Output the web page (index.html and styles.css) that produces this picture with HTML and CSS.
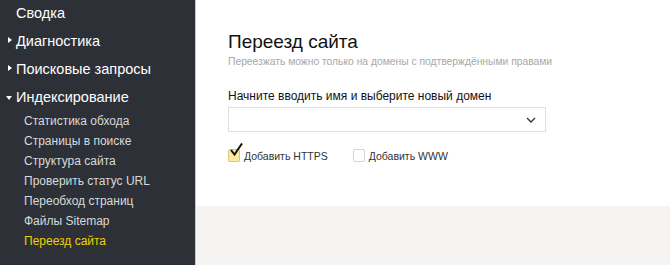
FILE: index.html
```html
<!DOCTYPE html>
<html lang="ru">
<head>
    <meta charset="UTF-8">
    <title>Переезд сайта</title>
    <link rel="stylesheet" href="styles.css">
</head>
<body>
    <div class="layout">
        <div class="sidebar">
            <div class="menu-item">Сводка</div>
            <div class="menu-item closed">Диагностика</div>
            <div class="menu-item closed">Поисковые запросы</div>
            <div class="menu-item open">Индексирование</div>
            <div class="submenu">
                <div class="sub-item">Статистика обхода</div>
                <div class="sub-item">Страницы в поиске</div>
                <div class="sub-item">Структура сайта</div>
                <div class="sub-item">Проверить статус URL</div>
                <div class="sub-item">Переобход страниц</div>
                <div class="sub-item">Файлы Sitemap</div>
                <div class="sub-item active">Переезд сайта</div>
            </div>
        </div>

        <div class="main">
            <div class="content">
                <h1>Переезд сайта</h1>
                <div class="hint">Переезжать можно только на домены с подтверждёнными правами</div>

                <div class="label">Начните вводить имя и выберите новый домен</div>
                <div class="select">
                    <svg width="10" height="6" viewBox="0 0 10 6"><path d="M1 1 L5 5 L9 1" fill="none" stroke="#333" stroke-width="1.3"/></svg>
                </div>

                <div class="options">
                    <label class="check">
                        <span class="box checked">
                            <svg width="16" height="16" viewBox="0 0 16 16"><path d="M3 7 L6.5 11.5 L14 0.5" fill="none" stroke="#111" stroke-width="2"/></svg>
                        </span>
                        Добавить HTTPS
                    </label>
                    <label class="check">
                        <span class="box"></span>
                        Добавить WWW
                    </label>
                </div>
            </div>
            <div class="footer"></div>
        </div>
    </div>
</body>
</html>
```

FILE: styles.css
```css
body {
    margin: 0;
    font-family: Arial, "Liberation Sans", sans-serif;
    background-color: #f5f4f2;
}

.layout {
    display: flex;
    height: 265px;
    overflow: hidden;
}

.sidebar {
    width: 196px;
    flex-shrink: 0;
    background-color: #2d3137;
    border-right: 1px solid #c9c9c9;
    box-sizing: border-box;
    margin-top: -1px;
}

.menu-item {
    color: #ffffff;
    font-size: 14.5px;
    line-height: 28px;
    padding-left: 16px;
    position: relative;
}

.menu-item.closed::before {
    content: "";
    position: absolute;
    left: 8px;
    top: 10px;
    border-left: 4px solid #ffffff;
    border-top: 3.5px solid transparent;
    border-bottom: 3.5px solid transparent;
}

.menu-item.open::before {
    content: "";
    position: absolute;
    left: 6px;
    top: 13px;
    border-top: 4px solid #ffffff;
    border-left: 3.5px solid transparent;
    border-right: 3.5px solid transparent;
}

.sub-item {
    color: #d9d9d9;
    font-size: 12px;
    line-height: 20px;
    padding-left: 24px;
}

.sub-item.active {
    color: #f2cf00;
}

.main {
    flex: 1;
    display: flex;
    flex-direction: column;
}

.content {
    background-color: #ffffff;
    height: 206px;
    padding: 29px 0 0 32px;
    box-sizing: border-box;
}

h1 {
    margin: 0;
    font-weight: normal;
    font-size: 19px;
    line-height: 25px;
    color: #111111;
}

.hint {
    font-size: 10.3px;
    color: #a8a8a8;
    margin-top: 2px;
}

.label {
    font-size: 12px;
    color: #111111;
    margin-top: 22px;
}

.select {
    width: 318px;
    height: 25px;
    margin-top: 4px;
    border: 1px solid #dedede;
    box-sizing: border-box;
    display: flex;
    justify-content: flex-end;
    align-items: center;
    padding-right: 9px;
}

.options {
    display: flex;
    gap: 25px;
    margin-top: 17px;
}

.check {
    display: flex;
    align-items: center;
    font-size: 10.5px;
    color: #333333;
}

.box {
    width: 10px;
    height: 11px;
    border: 1px solid #d4d4d4;
    border-radius: 2px;
    margin-right: 4px;
    position: relative;
}

.box.checked {
    background-color: #fbe9a3;
    border-color: #d8c77a;
}

.box svg {
    position: absolute;
    left: -1px;
    top: -7px;
}

.footer {
    flex: 1;
    background-color: #f5f4f2;
}
```
